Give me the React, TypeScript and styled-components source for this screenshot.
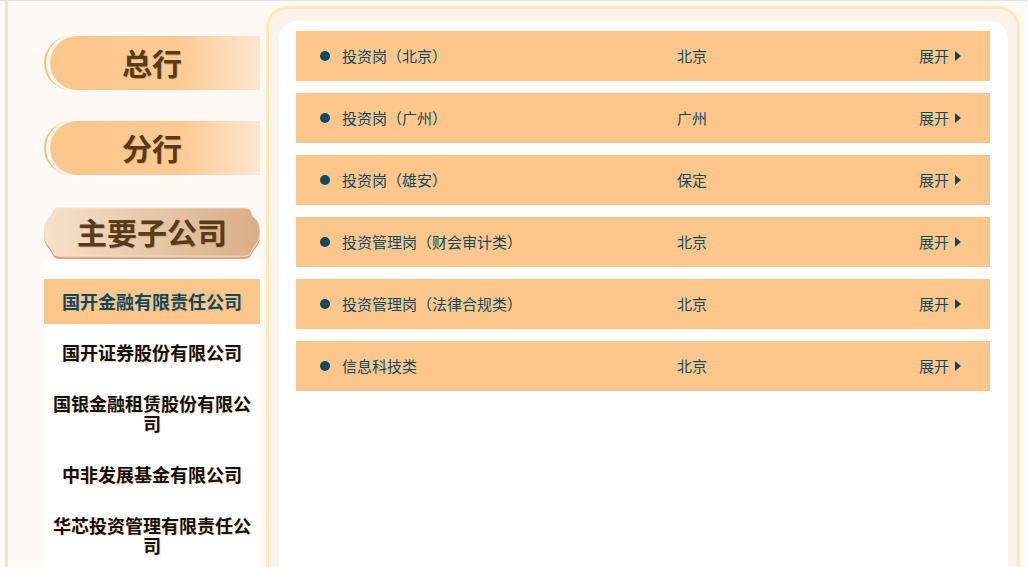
import React, { useState } from "react";
import styled, { createGlobalStyle } from "styled-components";

const GlobalStyle = createGlobalStyle`
  html, body {
    margin: 0;
    height: 567px;
    overflow: hidden;
    background: #fff9f5;
  }
  * { box-sizing: border-box; }
  body {
    font-family: "Noto Sans CJK SC", "Noto Sans", "Liberation Sans", sans-serif;
  }
`;

const Page = styled.div`
  display: flex;
  align-items: flex-start;
  height: 640px;
  border-top: 1px solid #e3e3e3;
  background: #fff9f5;
  padding-left: 5px;
`;

const Sidebar = styled.aside`
  flex: none;
  width: 260px;
  height: 100%;
  border-left: 3px solid #f6e2ca;
  padding: 35px 5px 0 36px;
  display: flex;
  flex-direction: column;
`;

const PillTab = styled.div<{ $gap: number }>`
  position: relative;
  height: 54px;
  margin: 0 0 ${(p) => p.$gap}px 6px;
  border-radius: 27px 0 0 27px;
  background: linear-gradient(90deg, #fdc78b 0%, #fdca92 62%, #fee6d1 100%);
  display: flex;
  align-items: center;
  justify-content: center;
  padding: 0 6px 2px 0;
  font-size: 30px;
  font-weight: 700;
  color: #5b3a1a;
  text-shadow: 1px 1px 0 rgba(90, 50, 10, 0.18);
  cursor: pointer;

  &::before {
    content: "";
    position: absolute;
    left: -6px;
    top: 0;
    bottom: 0;
    width: 30px;
    border-left: 2px solid #fcc068;
    border-radius: 27px 0 0 27px;
  }
`;

const CloudTab = styled.div`
  position: relative;
  height: 53px;
  display: flex;
  align-items: center;
  justify-content: center;
  padding-bottom: 5px;
  font-size: 30px;
  font-weight: 700;
  color: #5b3a1a;
  text-shadow: 1px 1px 0 rgba(90, 50, 10, 0.2);

  & > span {
    position: relative;
  }
`;

const CloudFrame = styled.svg`
  position: absolute;
  inset: 0;
  width: 100%;
  height: 100%;
`;

const CompanyList = styled.ul`
  list-style: none;
  margin: 0;
  padding: 19px 0 0;
  flex: 1;
  background: #ffffff;
  display: flex;
  flex-direction: column;
  gap: 6px;
`;

const CompanyItem = styled.li<{ $active?: boolean }>`
  padding: 12px 9px 13px;
  line-height: 20px;
  font-size: 18px;
  font-weight: 700;
  text-align: center;
  color: ${(p) => (p.$active ? "#0c4a64" : "#111111")};
  background: ${(p) => (p.$active ? "#fdc78b" : "transparent")};
  text-shadow: 1px 1px 1px rgba(246, 176, 96, 0.45);
  cursor: pointer;
`;

const Main = styled.main`
  flex: none;
  width: 754px;
  height: 700px;
  margin: 5px 8px 0 1px;
  border: 3px solid #ffe9b4;
  border-bottom: none;
  border-radius: 22px 22px 0 0;
  background: #fbf3ec;
  padding: 12px 9px 0 10px;
`;

const Board = styled.div`
  height: 100%;
  background: #ffffff;
  border-radius: 18px 18px 0 0;
  padding: 10px 18px 0 17px;
  display: flex;
  flex-direction: column;
  gap: 12px;
`;

const JobRow = styled.div`
  height: 50px;
  background: #fdc78b;
  display: grid;
  grid-template-columns: 10px 323px 1fr auto;
  column-gap: 12px;
  align-items: center;
  padding: 0 29px 2px 24px;
  font-size: 15px;
  color: #0e4b63;
`;

const Dot = styled.span`
  width: 10px;
  height: 10px;
  margin-top: 2px;
  border-radius: 50%;
  background: #0b4a66;
`;

const Expand = styled.span`
  display: flex;
  align-items: center;
  gap: 6px;
  cursor: pointer;
`;

const Caret = styled.span`
  width: 0;
  height: 0;
  margin-top: 1px;
  border-top: 5px solid transparent;
  border-bottom: 5px solid transparent;
  border-left: 6px solid #0b4a66;
`;

const companies = [
  "国开金融有限责任公司",
  "国开证券股份有限公司",
  "国银金融租赁股份有限公司",
  "中非发展基金有限公司",
  "华芯投资管理有限责任公司",
];

const jobs = [
  { name: "投资岗（北京）", city: "北京" },
  { name: "投资岗（广州）", city: "广州" },
  { name: "投资岗（雄安）", city: "保定" },
  { name: "投资管理岗（财会审计类）", city: "北京" },
  { name: "投资管理岗（法律合规类）", city: "北京" },
  { name: "信息科技类", city: "北京" },
];

const cloudPath =
  "M14 1 H202 Q206 1 207 5 Q208 10 212 13 Q216 17 216 26 Q216 36 211 41 Q208 45 207 48 Q206 52 200 52 H16 Q10 52 9 48 Q8 45 5 41 Q0 36 0 26 Q0 17 4 13 Q8 10 9 5 Q10 1 14 1 Z";

export default function App() {
  const [active, setActive] = useState(0);

  return (
    <>
      <GlobalStyle />
      <Page>
        <Sidebar>
          <PillTab $gap={31}>总行</PillTab>
          <PillTab $gap={32}>分行</PillTab>
          <CloudTab>
            <CloudFrame viewBox="0 0 216 56" preserveAspectRatio="none">
              <defs>
                <linearGradient id="cloudFill" x1="0" y1="0" x2="1" y2="0">
                  <stop offset="0" stopColor="#f6e2c9" />
                  <stop offset="1" stopColor="#d8ae87" />
                </linearGradient>
              </defs>
              <path d={cloudPath} fill="#e2a37b" transform="translate(0 3)" />
              <path d={cloudPath} fill="url(#cloudFill)" stroke="#f7e4cb" strokeWidth="1" />
            </CloudFrame>
            <span>主要子公司</span>
          </CloudTab>
          <CompanyList>
            {companies.map((c, i) => (
              <CompanyItem key={c} $active={i === active} onClick={() => setActive(i)}>
                {c}
              </CompanyItem>
            ))}
          </CompanyList>
        </Sidebar>
        <Main>
          <Board>
            {jobs.map((j) => (
              <JobRow key={j.name}>
                <Dot />
                <span>{j.name}</span>
                <span>{j.city}</span>
                <Expand>
                  展开
                  <Caret />
                </Expand>
              </JobRow>
            ))}
          </Board>
        </Main>
      </Page>
    </>
  );
}
